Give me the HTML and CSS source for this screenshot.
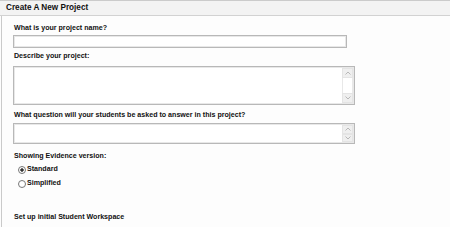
FILE: index.html
```html
<!DOCTYPE html>
<html lang="en">
<head>
    <meta charset="UTF-8">
    <title>Create A New Project</title>
    <link rel="stylesheet" href="styles.css">
</head>
<body>
    <div class="panel">
        <div class="panel_head">Create A New Project</div>
        <div class="panel_body">
            <label class="field_label label_name">What is your project name?</label>
            <input class="text_input" type="text">

            <label class="field_label label_desc">Describe your project:</label>
            <div class="area_box area_desc">
                <textarea class="area_text"></textarea>
                <div class="scroll_bar">
                    <span class="scroll_btn"><svg width="6" height="4" viewBox="0 0 6 4"><polyline points="0.5,3.5 3,1 5.5,3.5" /></svg></span>
                    <span class="scroll_track"></span>
                    <span class="scroll_btn"><svg width="6" height="4" viewBox="0 0 6 4"><polyline points="0.5,0.5 3,3 5.5,0.5" /></svg></span>
                </div>
            </div>

            <label class="field_label label_question">What question will your students be asked to answer in this project?</label>
            <div class="area_box area_question">
                <textarea class="area_text"></textarea>
                <div class="scroll_bar">
                    <span class="scroll_btn"><svg width="6" height="4" viewBox="0 0 6 4"><polyline points="0.5,3.5 3,1 5.5,3.5" /></svg></span>
                    <span class="scroll_btn"><svg width="6" height="4" viewBox="0 0 6 4"><polyline points="0.5,0.5 3,3 5.5,0.5" /></svg></span>
                </div>
            </div>

            <div class="field_label label_version">Showing Evidence version:</div>
            <label class="radio_row row_first"><input type="radio" name="version" checked><span>Standard</span></label>
            <label class="radio_row row_second"><input type="radio" name="version"><span>Simplified</span></label>

            <div class="section_title">Set up initial Student Workspace</div>
        </div>
    </div>
</body>
</html>
```

FILE: styles.css
```css
*{
    margin:0;
    padding:0;
    box-sizing: border-box;
}
body{
    width:450px;
    height:227px;
    overflow: hidden;
    background:#fdfdfd;
    color:#111;
    font-family:"Liberation Sans", Arial, sans-serif;
}
.panel{
    border-top:1px solid #cbcbcb;
}
.panel_head{
    height:15px;
    padding-left:6px;
    background:#f3f3f3;
    border-bottom:1px solid #d2d2d2;
    font-size:8.2px;
    font-weight: bold;
    line-height:14px;
}
.panel_body{
    display: flex;
    flex-direction: column;
    align-items: flex-start;
    height:211px;
    margin-left:1px;
    padding-left:11px;
    border-left:1px solid #cacaca;
}
.field_label{
    display: block;
    padding-left:1px;
    font-size:7.1px;
    font-weight: bold;
    line-height:9px;
}
.label_name{
    margin-top:8px;
    margin-bottom:2px;
}
.label_desc{
    margin-top:4px;
    margin-bottom:5px;
}
.label_question{
    margin-top:6px;
    margin-bottom:3px;
}
.label_version{
    margin-top:8px;
}
.text_input{
    width:334px;
    height:13px;
    border:1px solid #b8b8b8;
    box-shadow: inset 0 0 0 1px #e8e8e8;
    background:#fff;
    outline: none;
}
.area_box{
    display: flex;
    width:342px;
    border:1px solid #b8b8b8;
    box-shadow: inset 0 0 0 1px #e8e8e8;
    background:#fff;
}
.area_desc{
    height:39px;
}
.area_question{
    height:21px;
}
.area_text{
    flex:1;
    border:none;
    resize: none;
    outline: none;
    background: transparent;
}
.scroll_bar{
    display: flex;
    flex-direction: column;
    width:11px;
    margin:1px 1px 1px 0;
}
.scroll_btn{
    display: flex;
    align-items: center;
    justify-content: center;
    height:10px;
    background:#efefef;
    border:1px solid #e4e4e4;
}
.scroll_btn svg polyline{
    fill:none;
    stroke:#b8b8b8;
    stroke-width:1;
}
.scroll_track{
    flex:1;
    background:#fff;
    border-left:1px solid #e8e8e8;
    border-right:1px solid #e8e8e8;
}
.radio_row{
    display: flex;
    align-items: center;
    gap:1px;
    padding-left:5px;
    font-size:7.1px;
    font-weight: bold;
    line-height:9px;
}
.row_first{
    margin-top:4px;
}
.row_second{
    margin-top:5px;
}
.radio_row input{
    appearance: none;
    -webkit-appearance: none;
    width:8px;
    height:8px;
    border:1px solid #777;
    border-radius:50%;
    background:#fff;
}
.radio_row input:checked{
    background: radial-gradient(circle, #333 0, #333 1.4px, #fff 2px);
}
.section_title{
    margin-top:25px;
    padding-left:1px;
    font-size:7.1px;
    font-weight: bold;
    line-height:9px;
}
```
